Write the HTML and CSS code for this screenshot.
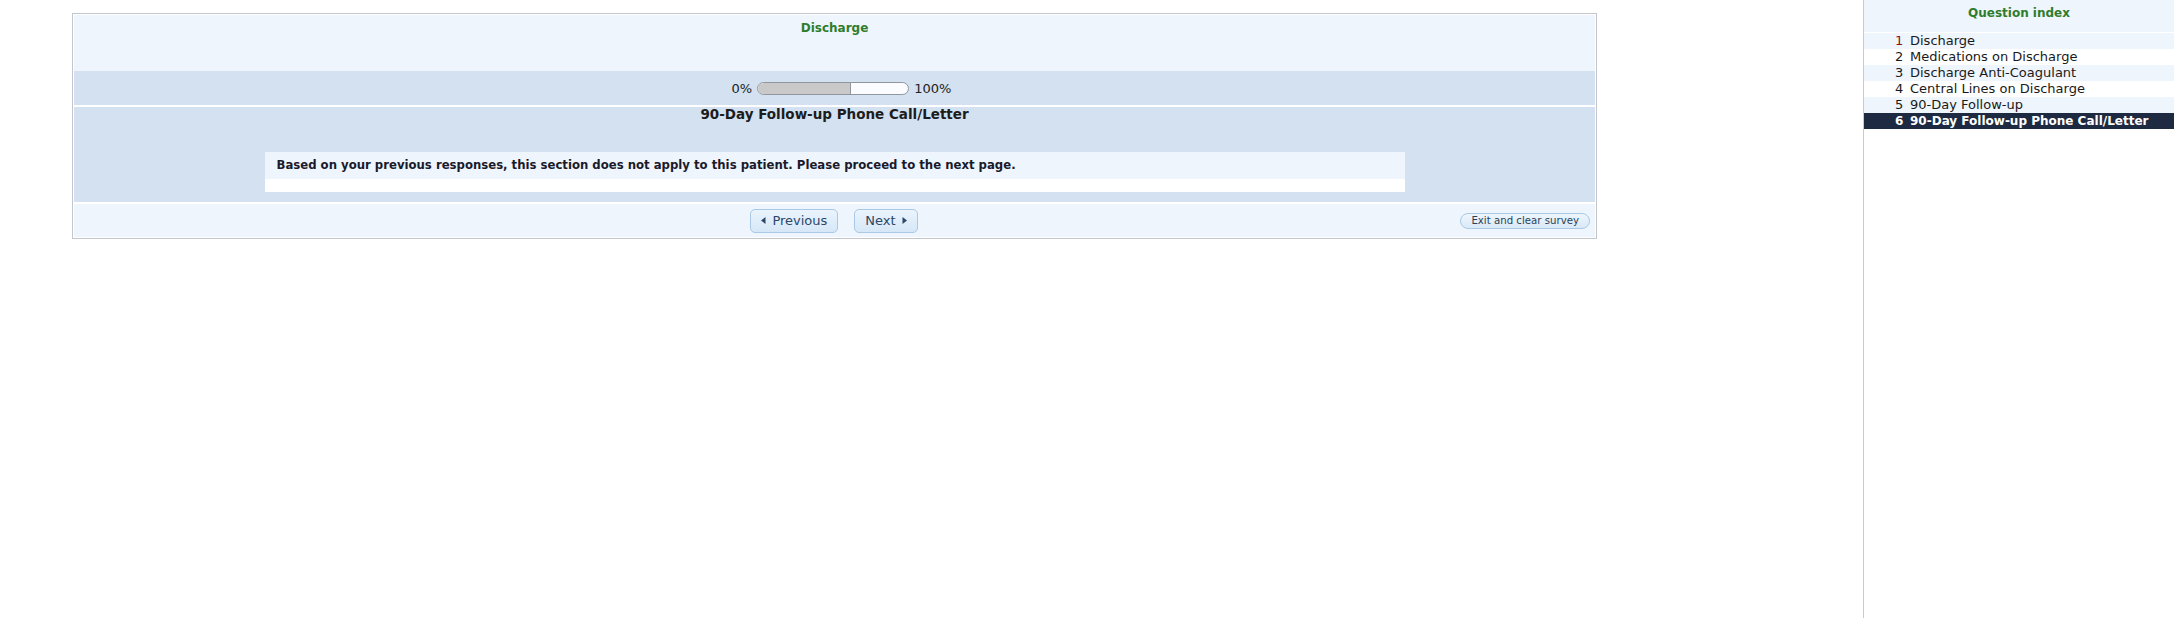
FILE: index.html
```html
<!DOCTYPE html>
<html>
<head>
<meta charset="utf-8">
<title>Survey</title>
<link rel="stylesheet" href="styles.css">
</head>
<body>
<div class="page">
  <div class="main">
    <div class="survey">
      <div class="header"><span class="group-title">Discharge</span></div>
      <div class="progress-band">
        <span class="pct">0%</span>
        <div class="bar"><div class="fill" style="width:62%"></div></div>
        <span class="pct">100%</span>
      </div>
      <div class="section">
        <div class="section-title">90-Day Follow-up Phone Call/Letter</div>
        <div class="notice">
          <div class="notice-text">Based on your previous responses, this section does not apply to this patient. Please proceed to the next page.</div>
          <div class="notice-foot"></div>
        </div>
      </div>
      <div class="footer">
        <div class="nav">
          <button class="btn"><svg class="tri" width="5" height="7" viewBox="0 0 5 7"><polygon points="4.5,0 4.5,7 0,3.5"/></svg>Previous</button>
          <button class="btn">Next<svg class="tri tri-r" width="5" height="7" viewBox="0 0 5 7"><polygon points="0.5,0 0.5,7 5,3.5"/></svg></button>
        </div>
        <button class="btn-exit">Exit and clear survey</button>
      </div>
    </div>
  </div>
  <div class="sidebar">
    <div class="side-head">Question index</div>
    <ul class="qlist">
      <li class="qi alt"><span class="num first">1</span>Discharge</li>
      <li class="qi"><span class="num">2</span>Medications on Discharge</li>
      <li class="qi alt"><span class="num">3</span>Discharge Anti-Coagulant</li>
      <li class="qi"><span class="num">4</span>Central Lines on Discharge</li>
      <li class="qi alt"><span class="num">5</span>90-Day Follow-up</li>
      <li class="qi current"><span class="num">6</span>90-Day Follow-up Phone Call/Letter</li>
    </ul>
  </div>
</div>
</body>
</html>
```

FILE: styles.css
```css
html, body {
  margin: 0;
  padding: 0;
  background: #ffffff;
}
body {
  font-family: "DejaVu Sans", Verdana, sans-serif;
  font-size: 12px;
  color: #1a1a1a;
}
.page {
  display: flex;
  width: 2178px;
  height: 618px;
}
.main {
  flex: 1;
  padding: 13px 0 0 72px;
}
.survey {
  width: 1521px;
  border: 1px solid #c3c6ca;
  padding: 1px;
  background: #ffffff;
}
.header {
  height: 56px;
  background: #eef5fd;
  text-align: center;
  padding-top: 6px;
  box-sizing: border-box;
}
.group-title {
  font-weight: bold;
  color: #2f7d2c;
  font-size: 12px;
}
.progress-band {
  height: 34px;
  background: #d3e1f1;
  display: flex;
  align-items: center;
  justify-content: center;
  gap: 5px;
  padding-left: 14px;
  color: #222;
}
.pct {
  font-size: 13px;
}
.bar {
  width: 150px;
  height: 11px;
  border: 1px solid #8f969c;
  border-radius: 7px;
  background: #fafcff;
  overflow: hidden;
}
.fill {
  height: 100%;
  background: #c9c9c9;
  border-right: 1px solid #8f969c;
  box-sizing: border-box;
}
.section {
  margin-top: 2px;
  height: 95px;
  background: #d3e1f1;
  box-sizing: border-box;
  padding-top: 0;
}
.section-title {
  text-align: center;
  font-weight: bold;
  font-size: 13.5px;
  line-height: 15px;
  color: #1c1c1c;
}
.notice {
  width: 1140px;
  margin: 30px auto 0;
}
.notice-text {
  height: 27px;
  line-height: 27px;
  background: #eef5fd;
  padding-left: 12px;
  font-weight: bold;
  font-size: 11.7px;
  color: #1a1a2a;
}
.notice-foot {
  height: 13px;
  background: #ffffff;
}
.footer {
  margin-top: 2px;
  height: 33px;
  background: #eef5fd;
  display: flex;
  align-items: center;
  justify-content: center;
  position: relative;
}
.nav {
  display: flex;
  gap: 16px;
  margin-left: -1px;
}
.btn {
  height: 24px;
  padding: 0 10px;
  border: 1px solid #a9c9e6;
  border-radius: 5px;
  background: linear-gradient(#eaf4fd, #d6e7f7);
  color: #2b4768;
  font-family: "DejaVu Sans", Verdana, sans-serif;
  font-size: 13px;
  display: flex;
  align-items: center;
  gap: 6px;
}
.tri {
  fill: #2b4768;
}
.btn-exit {
  position: absolute;
  right: 5px;
  top: 9px;
  height: 16px;
  padding: 0 10px;
  border: 1px solid #a9c9e6;
  border-radius: 8px;
  background: linear-gradient(#eef6fd, #d9e9f7);
  color: #2b3f58;
  font-family: "DejaVu Sans", Verdana, sans-serif;
  font-size: 10.2px;
  line-height: 14px;
}
.sidebar {
  width: 310px;
  border-left: 1px solid #c8cacc;
  padding-right: 4px;
  height: 618px;
}
.side-head {
  height: 33px;
  background: #eef5fd;
  text-align: center;
  font-weight: bold;
  color: #2f7d2c;
  padding-top: 6px;
  box-sizing: border-box;
  border-bottom: 1px solid #ffffff;
}
.qlist {
  list-style: none;
  margin: 0;
  padding: 0;
}
.qi {
  height: 16px;
  line-height: 16px;
  padding-left: 31px;
  font-size: 13px;
  color: #1a1a1a;
  white-space: nowrap;
}
.qi.alt {
  background: #eef5fd;
}
.num {
  display: inline-block;
  width: 15px;
}
.num.first {
  color: #8a1111;
}
.qi.current {
  background: #1d2a41;
  color: #ffffff;
  font-weight: bold;
  font-size: 12px;
}
```
